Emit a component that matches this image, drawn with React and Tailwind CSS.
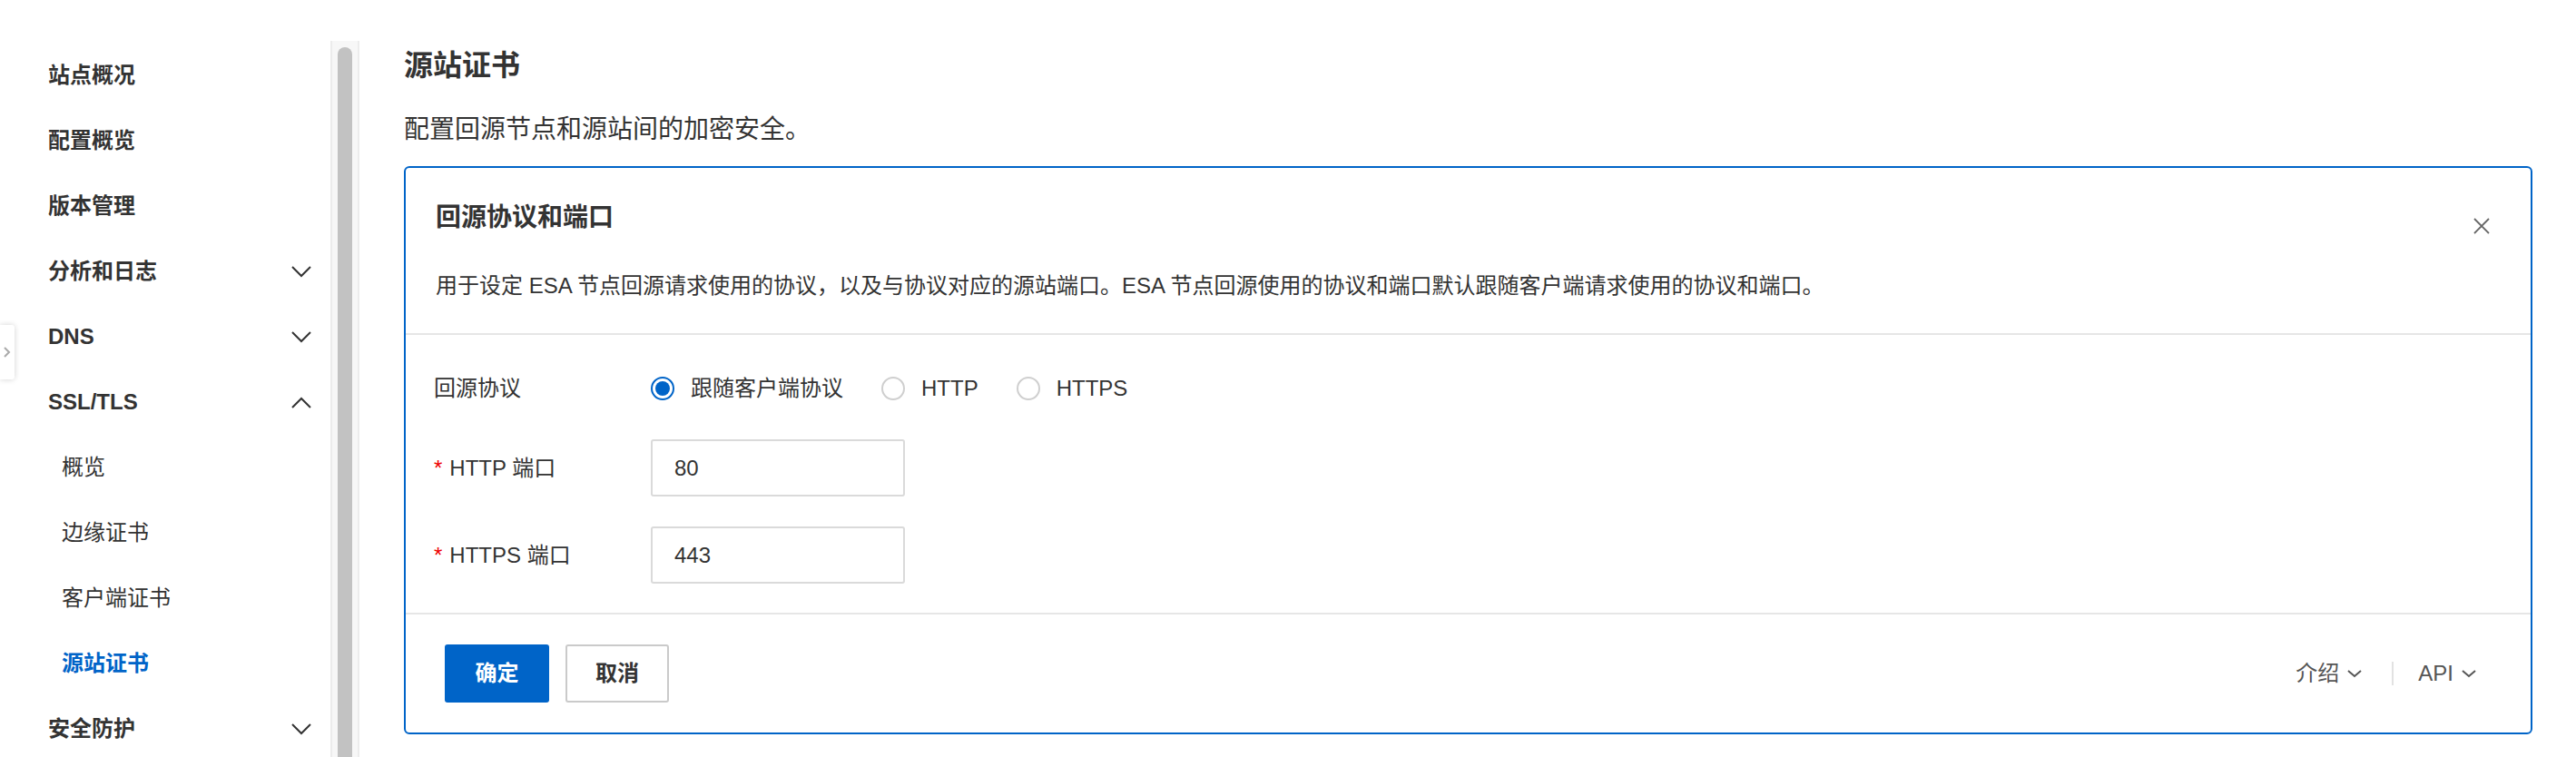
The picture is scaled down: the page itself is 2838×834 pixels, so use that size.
import React from "react";

function Chevron({ up = false, className = "" }) {
  return (
    <svg width="22" height="13" viewBox="0 0 22 13" className={className}>
      <polyline
        points={up ? "1,12 11,2 21,12" : "1,1 11,11 21,1"}
        fill="none"
        stroke="#333"
        strokeWidth="2"
      />
    </svg>
  );
}

function SmallChevron() {
  return (
    <svg width="16" height="10" viewBox="0 0 16 10">
      <polyline points="1,2 8,8 15,2" fill="none" stroke="#555" strokeWidth="2" />
    </svg>
  );
}

function Radio({ checked, label }) {
  return (
    <label className="flex items-center mr-[42px]">
      {checked ? (
        <span className="flex h-[26px] w-[26px] items-center justify-center rounded-full border-2 border-[#0064c8]">
          <span className="h-[16px] w-[16px] rounded-full bg-[#0064c8]" />
        </span>
      ) : (
        <span className="h-[26px] w-[26px] rounded-full border-2 border-[#cfcfcf]" />
      )}
      <span className="ml-[18px] text-[24px] leading-[36px] text-[#333]">{label}</span>
    </label>
  );
}

export default function App() {
  const item = "flex h-[72px] items-center justify-between pl-[53px] pr-[21px]";
  const sub = "flex h-[72px] items-center pl-[68px] text-[24px]";

  return (
    <div className="relative flex h-[834px] w-[2838px] overflow-hidden bg-white font-['Liberation_Sans','Noto_Sans_CJK_SC',sans-serif] text-[#333]">
      {/* sidebar */}
      <aside className="w-[364px] shrink-0 pt-[47px]">
        <ul className="text-[24px] font-semibold">
          <li className={item}>站点概况</li>
          <li className={item}>配置概览</li>
          <li className={item}>版本管理</li>
          <li className={item}>
            分析和日志
            <Chevron />
          </li>
          <li className={item}>
            DNS
            <Chevron />
          </li>
          <li className={item}>
            SSL/TLS
            <Chevron up />
          </li>
          <li className={`${sub} font-normal`}>概览</li>
          <li className={`${sub} font-normal`}>边缘证书</li>
          <li className={`${sub} font-normal`}>客户端证书</li>
          <li className={`${sub} text-[#0064c8]`}>源站证书</li>
          <li className={item}>
            安全防护
            <Chevron />
          </li>
        </ul>
      </aside>

      {/* collapse toggle */}
      <div className="absolute left-0 top-[358px] flex h-[60px] w-[16px] items-center justify-center rounded-r-[3px] bg-white shadow-[0_0_6px_rgba(0,0,0,0.18)]">
        <svg width="8" height="12" viewBox="0 0 8 12">
          <polyline points="1,1 6,6 1,11" fill="none" stroke="#aaa" strokeWidth="2" />
        </svg>
      </div>

      {/* scrollbar */}
      <div className="flex w-[32px] shrink-0 flex-col pt-[45px]">
        <div className="flex-1 border-x-2 border-[#ececec] bg-[#f7f7f7] px-[6px] pt-[7px]">
          <div className="h-[900px] rounded-t-full bg-[#c2c2c2]" />
        </div>
      </div>

      {/* main */}
      <main className="flex-1 pl-[49px] pr-[48px] pt-[52px]">
        <h1 className="text-[32px] font-semibold leading-[40px]">源站证书</h1>
        <p className="mt-[33px] text-[28px] leading-[36px]">配置回源节点和源站间的加密安全。</p>

        <section className="mt-[22px] rounded-[6px] border-2 border-[#0064c8]">
          <div className="border-b-2 border-[#e6e6e6] pb-[34px] pl-[33px] pr-[45px] pt-[35px]">
            <div className="flex items-start justify-between">
              <h2 className="text-[28px] font-semibold leading-[40px]">回源协议和端口</h2>
              <svg width="18" height="18" viewBox="0 0 18 18" className="mt-[20px]">
                <path d="M1 1L17 17M17 1L1 17" stroke="#666" strokeWidth="1.8" />
              </svg>
            </div>
            <p className="mt-[37px] text-[24px] leading-[36px]">
              用于设定 ESA 节点回源请求使用的协议，以及与协议对应的源站端口。ESA 节点回源使用的协议和端口默认跟随客户端请求使用的协议和端口。
            </p>
          </div>

          <div className="border-b-2 border-[#e6e6e6] pb-[32px] pl-[31px] pt-[39px]">
            <div className="flex h-[40px] items-center">
              <span className="w-[239px] text-[24px] leading-[36px]">回源协议</span>
              <Radio checked label="跟随客户端协议" />
              <Radio label="HTTP" />
              <Radio label="HTTPS" />
            </div>
            <div className="mt-[36px] flex items-center">
              <span className="w-[239px] text-[24px] leading-[36px]">
                <span className="mr-[8px] text-[#e00]">*</span>HTTP 端口
              </span>
              <div className="flex h-[63px] w-[280px] items-center rounded-[3px] border-2 border-[#dadada] pl-[24px] text-[24px]">
                80
              </div>
            </div>
            <div className="mt-[33px] flex items-center">
              <span className="w-[239px] text-[24px] leading-[36px]">
                <span className="mr-[8px] text-[#e00]">*</span>HTTPS 端口
              </span>
              <div className="flex h-[63px] w-[280px] items-center rounded-[3px] border-2 border-[#dadada] pl-[24px] text-[24px]">
                443
              </div>
            </div>
          </div>

          <div className="flex items-center justify-between pb-[33px] pl-[43px] pr-[60px] pt-[33px]">
            <div className="flex gap-[18px]">
              <button className="h-[64px] w-[115px] rounded-[3px] bg-[#0064c8] text-[24px] font-semibold text-white">
                确定
              </button>
              <button className="h-[64px] w-[114px] rounded-[3px] border-2 border-[#cacaca] bg-white text-[24px] font-semibold text-[#333]">
                取消
              </button>
            </div>
            <div className="flex items-center text-[24px] text-[#555]">
              <span className="flex items-center gap-[9px]">
                介绍
                <SmallChevron />
              </span>
              <span className="ml-[33px] mr-[27px] h-[26px] w-[2px] bg-[#e2e2e2]" />
              <span className="flex items-center gap-[9px]">
                API
                <SmallChevron />
              </span>
            </div>
          </div>
        </section>
      </main>
    </div>
  );
}
